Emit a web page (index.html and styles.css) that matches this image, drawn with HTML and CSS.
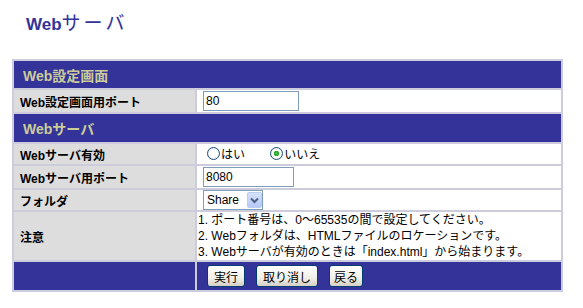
FILE: index.html
```html
<!DOCTYPE html>
<html lang="ja">
<head>
  <meta charset="UTF-8">
  <meta name="viewport" content="width=device-width, initial-scale=1.0">
  <title>Webサーバ</title>
  <link rel="stylesheet" href="styles.css">
</head>
<body>
  <h1 class="page-title">Web<span class="jp">サーバ</span></h1>

  <form class="settings">
    <table class="grid">
      <colgroup>
        <col class="col-label">
        <col class="col-value">
      </colgroup>
      <tr class="section"><th colspan="2">Web設定画面</th></tr>
      <tr class="row-port">
        <th class="label">Web設定画面用ポート</th>
        <td class="value"><input class="text w96" type="text" value="80"></td>
      </tr>

      <tr class="section section-tall"><th colspan="2">Webサーバ</th></tr>
      <tr class="row-radio">
        <th class="label">Webサーバ有効</th>
        <td class="value">
          <label class="choice"><input type="radio" name="enable" value="1">はい</label>
          <label class="choice"><input type="radio" name="enable" value="0" checked>いいえ</label>
        </td>
      </tr>
      <tr class="row-port">
        <th class="label">Webサーバ用ポート</th>
        <td class="value"><input class="text w91" type="text" value="8080"></td>
      </tr>
      <tr class="row-folder">
        <th class="label">フォルダ</th>
        <td class="value">
          <span class="select">
            <select name="folder"><option>Share</option></select>
            <span class="arrow"><svg width="9" height="7" viewBox="0 0 9 7"><path d="M1 1.5 L4.5 5 L8 1.5" fill="none" stroke="#4d6185" stroke-width="2"/></svg></span>
          </span>
        </td>
      </tr>
      <tr class="row-notes">
        <th class="label">注意</th>
        <td class="value notes">
          <div>1. ポート番号は、0～65535の間で設定してください。</div>
          <div>2. Webフォルダは、HTMLファイルのロケーションです。</div>
          <div>3. Webサーバが有効のときは「index.html」から始まります。</div>
        </td>
      </tr>
      <tr class="actions">
        <th></th>
        <td>
          <div class="buttons">
            <button type="button" class="btn">実行</button>
            <button type="button" class="btn">取り消し</button>
            <button type="button" class="btn btn-narrow">戻る</button>
          </div>
        </td>
      </tr>
    </table>
  </form>
</body>
</html>
```

FILE: styles.css
```css
body {
  margin: 0;
  font-family: "Liberation Sans", "Noto Sans CJK JP", sans-serif;
  font-size: 12px;
  color: #000;
  background: #fff;
}
.page-title {
  margin: 0;
  height: 59px;
  padding: 8px 0 0 26px;
  box-sizing: border-box;
  font-size: 17px;
  font-weight: bold;
  color: #333399;
}
.page-title .jp {
  font-weight: normal;
  font-size: 19px;
  letter-spacing: 3px;
}
.settings {
  margin: 0;
}
.grid {
  margin-left: 12px;
  width: 551px;
  border-spacing: 2px;
  background: #ccccdd;
  table-layout: fixed;
}
.col-label {
  width: 181px;
}
.grid th,
.grid td {
  padding: 0;
}
.section th {
  height: 27px;
  padding-left: 9px;
  background: #333399;
  color: #cccc99;
  font-size: 14px;
  text-align: left;
}
.section-tall th {
  height: 28px;
}
.label {
  padding-left: 6px !important;
  background: #dddddd;
  text-align: left;
  font-weight: bold;
  white-space: nowrap;
}
.value {
  background: #fff;
}
.row-port th,
.row-port td {
  height: 22px;
}
.row-radio th,
.row-radio td {
  height: 20px;
}
.row-folder th,
.row-folder td {
  height: 20px;
}
.text {
  display: block;
  margin-left: 6px;
  height: 20px;
  box-sizing: border-box;
  border: 1px solid #7f9db9;
  padding: 0 2px;
  font: 12px "Liberation Sans", sans-serif;
}
.w96 {
  width: 96px;
}
.w91 {
  width: 91px;
}
.choice {
  display: inline-flex;
  align-items: center;
  margin-left: 10px;
  margin-right: 12px;
}
.choice input {
  appearance: none;
  -webkit-appearance: none;
  width: 13px;
  height: 13px;
  margin: 0 1px 0 0;
  border: 1px solid #1c5180;
  border-radius: 50%;
  background: radial-gradient(circle, #fff 40%, #dcdcd6 100%);
}
.choice input:checked {
  background: radial-gradient(circle, #4ec44e 0, #21a121 2.5px, #fff 3px, #fff 40%, #dcdcd6 100%);
}
.select {
  display: inline-flex;
  align-items: center;
  margin-left: 6px;
  width: 60px;
  height: 20px;
  box-sizing: border-box;
  border: 1px solid #7f9db9;
  vertical-align: middle;
}
.select select {
  appearance: none;
  -webkit-appearance: none;
  width: 43px;
  border: 0;
  padding: 0 3px;
  background: transparent;
  font: 12px "Liberation Sans", sans-serif;
}
.select .arrow {
  display: flex;
  align-items: center;
  justify-content: center;
  width: 15px;
  height: 16px;
  box-sizing: border-box;
  border: 1px solid #b9ccf2;
  border-radius: 2px;
  background: linear-gradient(#d6e2fd, #b5c9f6);
}
.notes {
  height: 48px;
  padding-left: 1px !important;
  line-height: 16px;
  white-space: nowrap;
}
.actions th,
.actions td {
  height: 28px;
  background: #333399;
}
.buttons {
  display: flex;
  gap: 11px;
  padding-left: 10px;
}
.btn {
  height: 22px;
  padding: 0 6px;
  border: 1px solid #003c74;
  border-radius: 3px;
  background: linear-gradient(#ffffff, #f0efe8 60%, #d6d0c5);
  font: 12px "Liberation Sans", "Noto Sans CJK JP", sans-serif;
  color: #000;
}
.btn-narrow {
  padding: 0 4px;
}
```
